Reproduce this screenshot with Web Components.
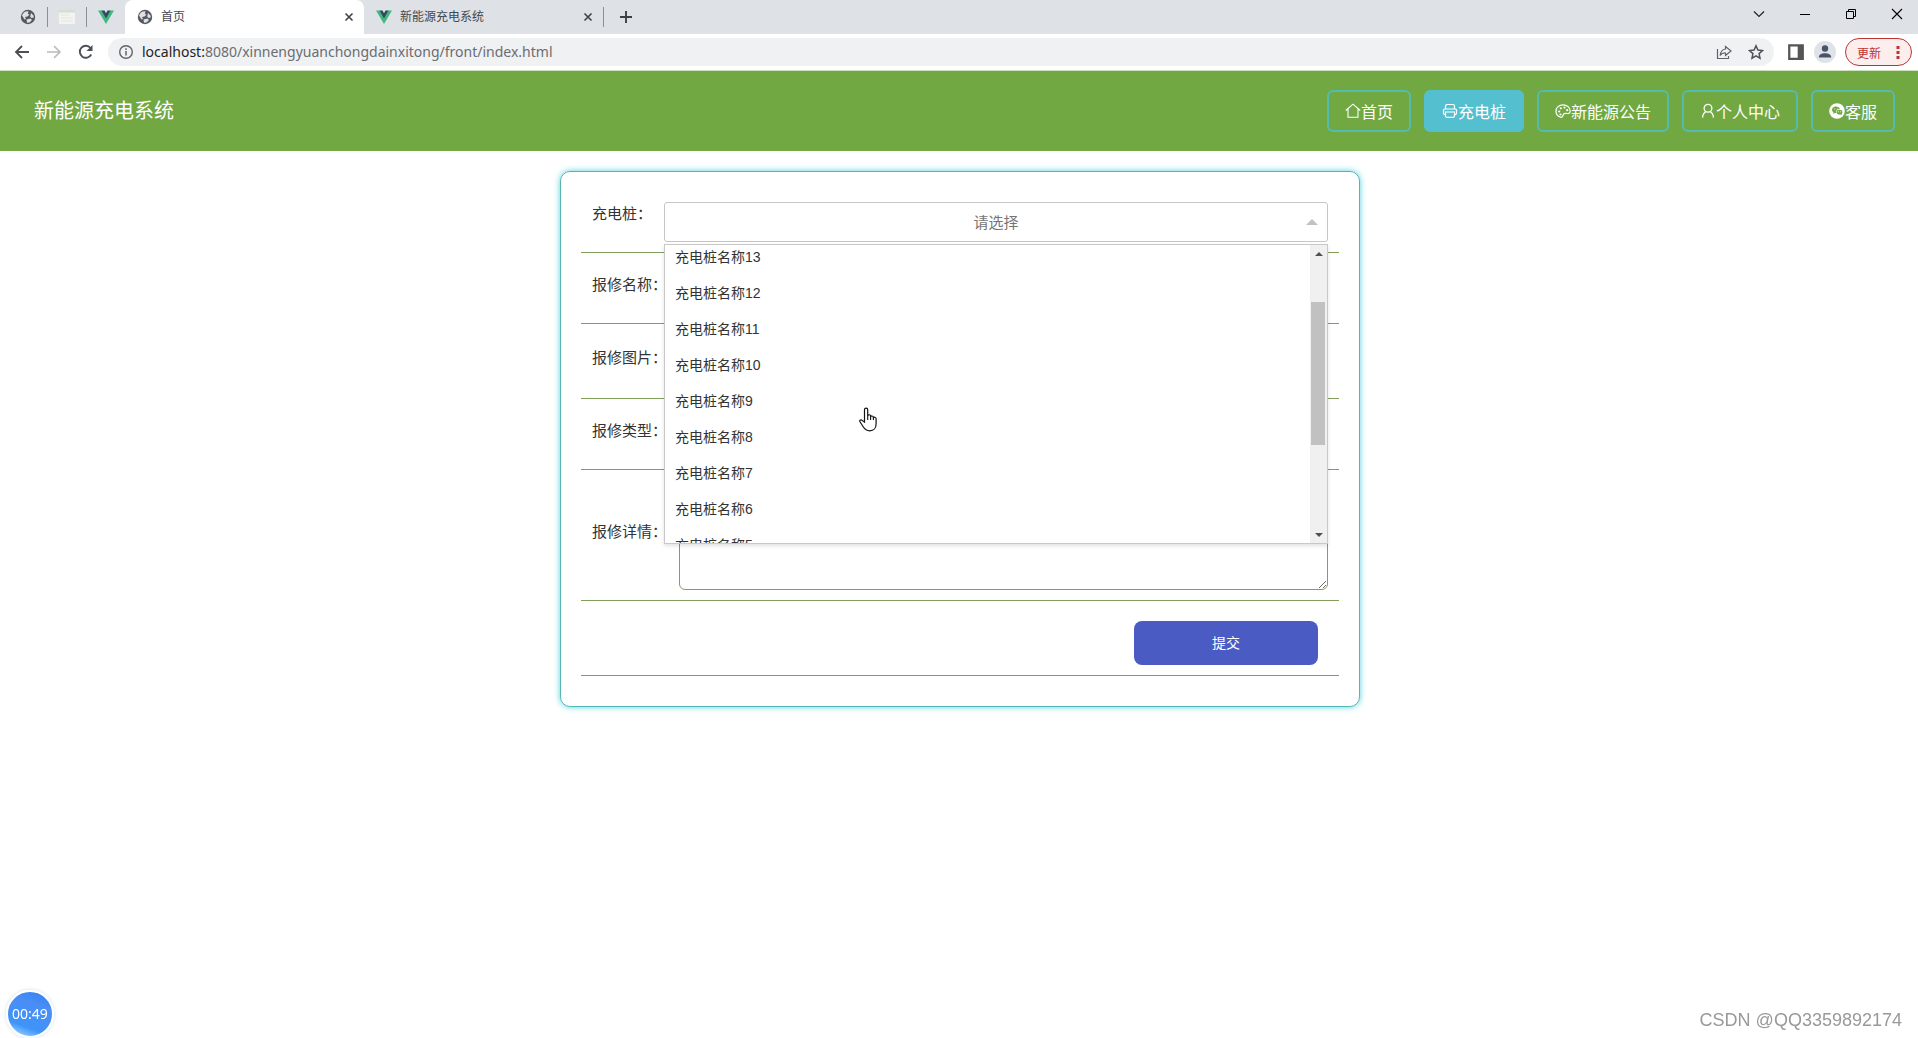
<!DOCTYPE html>
<html lang="zh-CN">
<head>
<meta charset="utf-8">
<title>首页</title>
<style>
body{margin:0;min-height:100vh;background:#fff;color:#333;font-family:"Liberation Sans","Noto Sans CJK SC",sans-serif;font-size:15px;overflow:hidden}
</style>
</head>
<body>
<browser-bar></browser-bar>
<site-header></site-header>
<repair-form></repair-form>
<record-timer>00:49</record-timer>
<page-mark>CSDN @QQ3359892174</page-mark>
<hand-pointer></hand-pointer>
<script>
const define = (name, html, setup) => customElements.define(name, class extends HTMLElement {
  connectedCallback() {
    if (this.shadowRoot) return;
    this.attachShadow({mode: 'open'}).innerHTML = '<style>*{box-sizing:border-box}svg{display:block;flex:none}</style>' + html;
    if (setup) setup(this, this.shadowRoot);
  }
});

const icons = {
  globe: ['0 0 16 16', '<circle cx="8" cy="8" r="7.200" fill="#55585c"/><path d="M2 6.500C3 3.500 5.500 2 8.500 2.300L7.800 4.500l1.500 1.200-1.800 1.800-2.500.500 1 2-1.500.5z" fill="#dee1e6"/><path d="M11 4l2.500 2.500.3 2-2.300.5-1.300-1.500zM6.500 10.500l4-1 1.500 1.500-2.500 2.500-2.500.3z" fill="#dee1e6"/>'],
  doc: ['0 0 16 16', '<path d="M0 1h16v14H0z" fill="#f3f4f1"/><path d="M0 1h16v2.500H0z" fill="#d4ddd6"/><path d="M2 6h8M2 9h12M2 12h12" stroke="#e4e6e2"/>'],
  vue: ['0 0 16 16', '<path d="M0 1.500h4L8 8.500l4-7h4L8 15z" fill="#41b883"/><path d="M3.500 1.500h3L8 4.200l1.500-2.700h3L8 9.500z" fill="#35495e"/>'],
  close: ['0 0 16 16', '<path d="M4 4l8 8M12 4l-8 8" stroke="#3c4043" stroke-width="1.800"/>'],
  plus: ['0 0 16 16', '<path d="M8 2v12M2 8h12" stroke="#3c4043" stroke-width="1.900"/>'],
  chevron: ['0 0 16 16', '<path d="M3 5.500l5 5 5-5" stroke="#222" fill="none" stroke-width="1.200"/>'],
  min: ['0 0 16 16', '<path d="M3 8.500h10" stroke="#000"/>'],
  restore: ['0 0 16 16', '<path d="M3.500 5.500h7v7h-7zM5.500 5.500v-2h7v7h-2" stroke="#000" fill="none"/>'],
  quit: ['0 0 16 16', '<path d="M3 3l10 10M13 3L3 13" stroke="#000" fill="none" stroke-width="1.100"/>'],
  back: ['0 0 16 16', '<path d="M15 8H2M8 2L2 8l6 6" stroke="#4c4f53" fill="none" stroke-width="1.800"/>'],
  forward: ['0 0 16 16', '<path d="M1 8h13M8 2l6 6-6 6" stroke="#b8babd" fill="none" stroke-width="1.600"/>'],
  reload: ['0 0 16 16', '<path d="M13.200 10.500A6 6 0 1 1 12.500 4" stroke="#4c4f53" fill="none" stroke-width="1.900"/><path d="M14.500 1v6h-6z" fill="#4c4f53"/>'],
  info: ['0 0 16 16', '<circle cx="8" cy="8" r="6.300" stroke="#5f6368" fill="none" stroke-width="1.400"/><path d="M8 7v4.500M8 4.300v1.600" stroke="#5f6368" stroke-width="1.500"/>'],
  share: ['0 0 16 16', '<path d="M1.500 5v9.500h11V12" stroke="#5f6368" fill="none" stroke-width="1.200"/><path d="M9.500 2.500L15 7l-5.500 4.500V9C7 8.800 5.500 9.500 4.200 11.500 4.500 8 6 5.500 9.500 5z" stroke="#5f6368" fill="none" stroke-width="1.200"/>'],
  star: ['0 0 16 16', '<path d="M8 1.800l1.900 4.200 4.600.500-3.400 3.100.9 4.600L8 11.900l-4 2.300.9-4.600L1.500 6.500l4.600-.5z" stroke="#4d5156" fill="none" stroke-width="1.500"/>'],
  panel: ['0 0 16 16', '<path d="M2 2h12v12H2z" fill="#fff" stroke="#555" stroke-width="2"/><path d="M9.500 2H14v12H9.500z" fill="#555"/>'],
  avatar: ['0 0 22 22', '<circle cx="11" cy="11" r="11" fill="#dfe2e8"/><circle cx="11" cy="7.500" r="3.200" fill="#4a5268"/><path d="M4.800 16.500c0-3 3-4.200 6.200-4.200s6.200 1.200 6.200 4.200z" fill="#4a5268"/>'],
  dots: ['0 0 4 16', '<path d="M.5 2h3v3h-3zM.5 7h3v3h-3zM.5 12h3v3h-3z" fill="#b33"/>'],
  home: ['0 0 16 16', '<path d="M.8 7.500L8 1.200l7.200 6.300M3 6v8.200h10V6" stroke="currentColor" fill="none" stroke-width="1.100"/>'],
  print: ['0 0 16 16', '<path d="M3.500 6V3.200A1.700 1.700 0 0 1 5.200 1.500h5.600a1.700 1.700 0 0 1 1.700 1.700V6M3.500 11.500H2.800A1.300 1.300 0 0 1 1.500 10.200V7.300A1.300 1.300 0 0 1 2.800 6h10.400a1.300 1.300 0 0 1 1.300 1.300v2.900a1.300 1.300 0 0 1-1.300 1.300h-.7M3.500 9h9v3.800a1.500 1.500 0 0 1-1.500 1.500H5a1.500 1.500 0 0 1-1.500-1.500z" stroke="currentColor" fill="none" stroke-width="1.200"/>'],
  palette: ['0 0 16 16', '<path d="M5.500 14.200C2.500 13.200 1 11 1 8.200 1 4.500 4 1.800 8 1.800s7.200 2.700 7.200 6.200c0 2-1.200 2.700-2.700 2.500-2.200-.4-3.500-.6-4 .8-.5 1.700-1.200 3.400-3 2.900z" stroke="currentColor" fill="none" stroke-width="1.200"/><circle cx="4.200" cy="8.500" r="1.100" fill="currentColor"/><circle cx="5.800" cy="5.300" r="1.100" fill="currentColor"/><circle cx="9.500" cy="4.600" r="1.100" fill="currentColor"/><circle cx="12.200" cy="7.200" r="1.100" fill="currentColor"/><circle cx="5.500" cy="11.500" r="1.100" fill="currentColor"/>'],
  user: ['0 0 16 16', '<circle cx="8" cy="5.200" r="3.900" stroke="currentColor" fill="none" stroke-width="1.300"/><path d="M6 8.600c-2 1-3.200 3-3.500 6M10 8.600c2 1 3.200 3 3.500 6" stroke="currentColor" fill="none" stroke-width="1.300"/>'],
  chat: ['0 0 16 16', '<circle cx="8" cy="8" r="7.800" fill="#fff"/><path d="M7 3.500c-2.400 0-4 1.400-4 3.200 0 1.100.6 2 1.500 2.600L4 10.800l2-.9h1c-.4-2.400 1.400-4 3.900-4C10.500 4.400 9 3.500 7 3.500z" fill="#71a842"/><ellipse cx="10.500" cy="9.200" rx="2.900" ry="2.400" fill="#71a842"/><path d="M11 11l1.800 1.300-.3-2z" fill="#71a842"/><circle cx="5.700" cy="6" r=".6" fill="#fff"/><circle cx="8.300" cy="6" r=".6" fill="#fff"/><circle cx="9.600" cy="8.800" r=".5" fill="#fff"/><circle cx="11.400" cy="8.800" r=".5" fill="#fff"/>']
};

define('ui-icon', '<style>:host{display:block;flex:none}</style>', (host, root) => {
  const [box, body] = icons[host.getAttribute('name')];
  const size = host.getAttribute('size') || 16;
  const w = box === '0 0 4 16' ? 4 : size;
  root.innerHTML += `<svg width="${w}" height="${size}" viewBox="${box}" aria-hidden="true">${body}</svg>`;
});

define('browser-tab', `<style>
:host{display:flex;align-items:center;gap:8px;height:34px;padding:0 8px 0 12px;font-size:12px;color:#45484d;line-height:16px}
:host([active]){background:#fff;border-radius:8px 8px 0 0}
span{flex:1;white-space:nowrap}
button{border:0;background:none;padding:0}
</style><slot name="icon"></slot><span><slot></slot></span><button aria-label="关闭标签页"><ui-icon name="close" size="14"></ui-icon></button>`);

define('browser-bar', `<style>
:host{display:block}
.tabs{display:flex;height:34px;background:#dee1e6;align-items:center}
.pins{display:flex;align-items:center;padding-left:20px;gap:11px;width:125px}
.pins i,.sep{width:1px;height:20px;background:#8b8e93}
.tab{width:239px}
.plus{margin-left:14px}
.win{margin-left:auto;display:flex;gap:30px;padding:0 13px 6px 0}
.bar{display:flex;align-items:center;height:36px;background:#fff;padding-right:6px}
.nav{display:flex;gap:16px;padding:0 14px}
.addr{flex:1;display:flex;align-items:center;height:28px;border-radius:14px;background:#f0f1f3;padding:0 10px}
button{border:0;background:none;padding:0;display:block;font:inherit}
.url{flex:1;margin-left:8px;font:14px/20px "Noto Sans",sans-serif;color:#6a6d71;text-decoration:none}
.url b{font-weight:400;color:#222}
.acts{display:flex;gap:16px}
.more{display:flex;align-items:center;gap:9px;margin-left:13px}
.upd{display:flex;align-items:center;gap:15px;height:28px;padding:0 11px;border:1px solid #b33;border-radius:14px;background:#fdeeee;color:#b33;font-size:12px}
.line{height:1px;background:#cfe0bf}
</style>
<div class="tabs">
 <div class="pins"><ui-icon name="globe"></ui-icon><i></i><ui-icon name="doc"></ui-icon><i></i><ui-icon name="vue"></ui-icon></div>
 <browser-tab class="tab" active><ui-icon slot="icon" name="globe"></ui-icon>首页</browser-tab>
 <browser-tab class="tab"><ui-icon slot="icon" name="vue"></ui-icon>新能源充电系统</browser-tab>
 <i class="sep"></i>
 <button class="plus" aria-label="新标签页"><ui-icon name="plus"></ui-icon></button>
 <div class="win"><button aria-label="搜索标签页"><ui-icon name="chevron"></ui-icon></button><button aria-label="最小化"><ui-icon name="min"></ui-icon></button><button aria-label="还原"><ui-icon name="restore"></ui-icon></button><button aria-label="关闭"><ui-icon name="quit"></ui-icon></button></div>
</div>
<div class="bar">
 <div class="nav"><button aria-label="后退"><ui-icon name="back"></ui-icon></button><button aria-label="前进"><ui-icon name="forward"></ui-icon></button><button aria-label="刷新"><ui-icon name="reload"></ui-icon></button></div>
 <div class="addr"><ui-icon name="info"></ui-icon><a class="url" href="#"><b>localhost:</b>8080/xinnengyuanchongdainxitong/front/index.html</a>
 <div class="acts"><button aria-label="分享"><ui-icon name="share"></ui-icon></button><button aria-label="收藏"><ui-icon name="star"></ui-icon></button></div></div>
 <div class="more"><button aria-label="侧边栏"><ui-icon name="panel" size="18"></ui-icon></button><button aria-label="用户"><ui-icon name="avatar" size="22"></ui-icon></button><button class="upd">更新<ui-icon name="dots"></ui-icon></button></div>
</div><div class="line"></div>`);

define('nav-link', `<style>
:host{display:block}
a{display:flex;align-items:center;height:42px;padding:0 16px;border:2px solid #54bbb4;border-radius:6px;color:#fff;text-decoration:none;font-size:16px;white-space:nowrap}
:host([active]) a{background:#54c0cf;border-color:#54c0cf}
</style><a href="#"><slot name="icon"></slot><slot></slot></a>`);

define('site-header', `<style>
:host{display:flex;align-items:center;justify-content:space-between;height:80px;padding:0 23px 0 34px;background:#71a842;color:#fff}
h1{margin:0;font-size:20px;font-weight:400;line-height:30px}
nav{display:flex;gap:13px}
</style><h1>新能源充电系统</h1>
<nav>
<nav-link><ui-icon slot="icon" name="home"></ui-icon>首页</nav-link>
<nav-link active><ui-icon slot="icon" name="print"></ui-icon>充电桩</nav-link>
<nav-link><ui-icon slot="icon" name="palette"></ui-icon>新能源公告</nav-link>
<nav-link><ui-icon slot="icon" name="user"></ui-icon>个人中心</nav-link>
<nav-link><ui-icon slot="icon" name="chat"></ui-icon>客服</nav-link>
</nav>`);

define('form-row', `<style>
:host{display:flex;align-items:center;padding:10px 11px;min-height:71px;border-bottom:1px solid #7f9f5a}
.label{width:72px;padding-bottom:6px;line-height:24px;white-space:nowrap}
.field{flex:1;display:flex;margin-left:15px}
:host([top]){align-items:flex-start;min-height:61px}
:host([top]) .label{padding-bottom:0}
:host([top]) .field{margin-left:0}
:host([mid]){min-height:75px}
:host([end]) .field{justify-content:flex-end;padding-right:10px}
</style><div class="label"><slot name="label"></slot></div><div class="field"><slot></slot></div>`);

define('option-list', `<style>
:host{display:flex;height:300px;border:1px solid #c8c8c8;background:#fff;box-shadow:0 2px 4px rgba(0,0,0,.12);font-size:14px;color:#333}
ul{flex:1;margin:0;padding:0;list-style:none;overflow:hidden}
li{padding:0 10px;height:36px;line-height:36px}
.bar{width:17px;background:#f0f0f0;display:flex;flex-direction:column}
.up,.down{height:17px;display:flex;align-items:center;justify-content:center}
.track{flex:1;padding:40px 2px 0 1px}
.thumb{height:143px;background:#c1c1c1}
</style><ul role="listbox" tabindex="0"></ul>
<div class="bar"><div class="up"><svg width="8" height="4"><path d="M0 4l4-4 4 4z" fill="#505050"/></svg></div><div class="track"><div class="thumb"></div></div><div class="down"><svg width="8" height="4"><path d="M0 0l4 4 4-4z" fill="#505050"/></svg></div></div>`,
(host, root) => {
  const ul = root.querySelector('ul');
  for (let n = 13; n >= 5; n--) {
    const li = document.createElement('li');
    li.setAttribute('role', 'option');
    li.textContent = '充电桩名称' + n;
    ul.append(li);
  }
  ul.scrollTop = 6;
});

define('repair-form', `<style>
:host{display:block;padding:20px 20px 20px 22px}
form{max-width:800px;margin:0 auto;padding:20px 20px 30px;border:1px solid #54b4b8;border-radius:10px;box-shadow:0 0 6px #54d0dc}
.pick{position:relative;flex:1}
select{appearance:none;display:block;width:100%;height:40px;border:1px solid #c6c6c6;border-radius:3px;background:#fff;color:#757575;font:inherit;text-align:center;text-align-last:center;padding:0}
.arrow{position:absolute;right:10px;top:17px;pointer-events:none}
option-list{position:absolute;left:0;right:0;top:42px;z-index:2}
input,textarea{flex:1;width:100%;border:1px solid #7f9f5a;border-radius:6px;font:inherit;background:#fff}
input{height:40px}
textarea{height:110px;display:block;outline:0}
.file{height:54px;border-color:transparent}
.send{width:184px;height:44px;margin-top:10px;border:0;border-radius:8px;background:#4a5cc4;color:#fff;font:14px/20px "Liberation Sans","Noto Sans CJK SC",sans-serif}
</style><form>
<form-row top><label slot="label" for="pile">充电桩：</label><div class="pick"><select id="pile"><option>请选择</option></select><svg class="arrow" width="12" height="6"><path d="M0 6l6-6 6 6z" fill="#c2c2c2"/></svg><option-list></option-list></div></form-row>
<form-row><label slot="label" for="name">报修名称：</label><input id="name"></form-row>
<form-row mid><label slot="label" for="pic">报修图片：</label><input id="pic" class="file"></form-row>
<form-row><label slot="label" for="type">报修类型：</label><input id="type"></form-row>
<form-row><label slot="label" for="detail">报修详情：</label><textarea id="detail"></textarea></form-row>
<form-row mid end><button class="send" type="button">提交</button></form-row>
</form>`);

define('record-timer', `<style>
:host{box-sizing:border-box;position:fixed;left:6px;bottom:0;width:48px;height:48px;border-radius:50%;border:2px solid #fff;display:flex;align-items:center;justify-content:center;background:linear-gradient(20deg,#7cc0ff 0 12%,#3f94f8 26%,#4a8df6 70%,#2f80f2);box-shadow:0 0 4px #d3dde8;color:#fff;font:14px/20px "Noto Sans",sans-serif}
</style><slot></slot>`);

define('page-mark', `<style>
:host{position:fixed;right:16px;bottom:6px;color:#999;font:18px/24px "Liberation Sans",sans-serif}
</style><slot></slot>`);

define('hand-pointer', `<style>
:host{position:absolute;left:859px;top:407px;z-index:5;pointer-events:none}
</style><svg width="18" height="25" viewBox="0 0 18 25"><path d="M5.500 15V2.700c0-2.200 3.200-2.200 3.200 0V9c0-1.800 2.900-1.600 2.900.2v.8c.2-1.500 2.800-1.400 2.800.5v.6c.3-1.300 2.700-1.200 2.700.6V17c0 4-2.500 6.800-6.300 6.800-3.500 0-5.200-1.800-6.800-4.300l-3-4.700c-.8-1.500 1-2.600 2.200-1.400z" fill="#fff" stroke="#111" stroke-width="1.200"/><path d="M8.700 8.500V13M11.600 9.500V13M14.400 10.500V13" stroke="#111" stroke-width="1.100"/></svg>`);
</script>
</body>
</html>
